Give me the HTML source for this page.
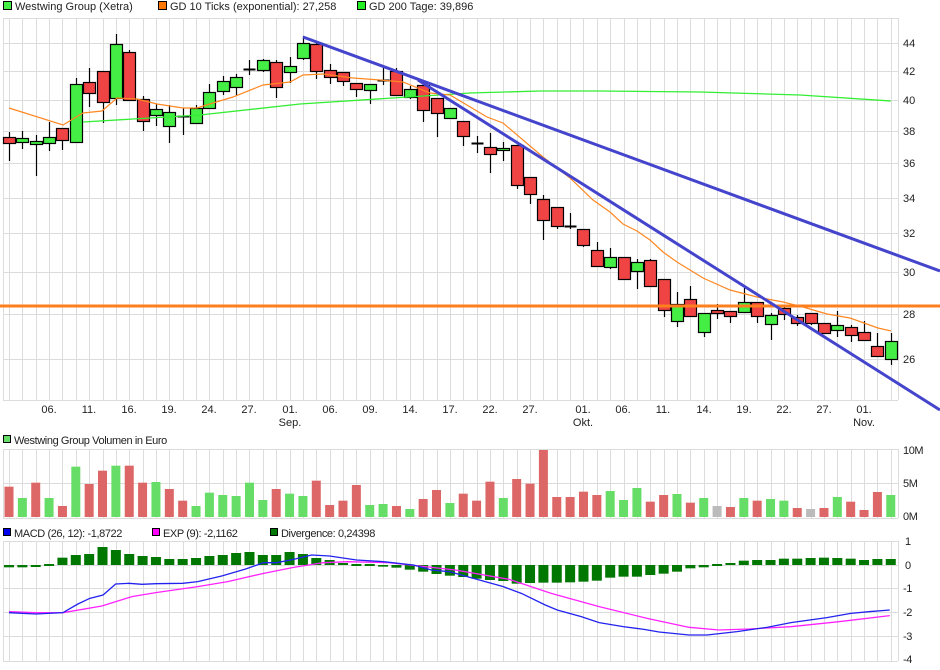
<!DOCTYPE html>
<html><head><meta charset="utf-8">
<style>
html,body{margin:0;padding:0;background:#fff;}
body{width:940px;height:670px;overflow:hidden;position:relative;font-family:"Liberation Sans",sans-serif;}
svg{position:absolute;left:0;top:0;}
text{font-family:"Liberation Sans",sans-serif;font-size:11px;fill:#222;}
.c{font-size:11px;letter-spacing:-0.4px;}
</style></head><body>
<svg id="s" width="940" height="670" viewBox="0 0 940 670">
<g id="grid"></g>
<g id="main"></g>
<rect x="3.5" y="1.5" width="8" height="8" fill="#44ee44" stroke="#000"/>
<text x="15" y="10">Westwing Group (Xetra)</text>
<rect x="158.5" y="1.5" width="8" height="8" fill="#ff7700" stroke="#000"/>
<text x="170" y="10">GD 10 Ticks (exponential): 27,258</text>
<rect x="357.5" y="1.5" width="8" height="8" fill="#22ee22" stroke="#000"/>
<text x="369" y="10">GD 200 Tage: 39,896</text>

<rect x="3.5" y="435.5" width="7" height="7" fill="#66dd66" stroke="#000"/>
<text class="c" x="14" y="444">Westwing Group Volumen in Euro</text>
<rect x="3.5" y="528.5" width="7" height="7" fill="#0000ee" stroke="#000"/>
<text class="c" x="14" y="537">MACD (26, 12): -1,8722</text>
<rect x="152.5" y="528.5" width="7" height="7" fill="#ff00ff" stroke="#000"/>
<text class="c" x="163" y="537">EXP (9): -2,1162</text>
<rect x="270.5" y="528.5" width="7" height="7" fill="#007700" stroke="#000"/>
<text class="c" x="281" y="537">Divergence: 0,24398</text>

<text x="903" y="47">44</text><text x="903" y="75">42</text><text x="903" y="104">40</text>
<text x="903" y="135">38</text><text x="903" y="167">36</text><text x="903" y="202">34</text>
<text x="903" y="237">32</text><text x="903" y="276">30</text><text x="903" y="318">28</text>
<text x="903" y="363">26</text>
<g text-anchor="middle">
<text x="49" y="413">06.</text><text x="89" y="413">11.</text><text x="129" y="413">16.</text>
<text x="169" y="413">19.</text><text x="209" y="413">24.</text><text x="249" y="413">27.</text>
<text x="290" y="413">01.</text><text x="290" y="426">Sep.</text>
<text x="330" y="413">06.</text><text x="370" y="413">09.</text><text x="410" y="413">14.</text>
<text x="450" y="413">17.</text><text x="490" y="413">22.</text><text x="530" y="413">27.</text>
<text x="583" y="413">01.</text><text x="583" y="426">Okt.</text>
<text x="623" y="413">06.</text><text x="663" y="413">11.</text><text x="704" y="413">14.</text>
<text x="744" y="413">19.</text><text x="784" y="413">22.</text><text x="824" y="413">27.</text>
<text x="864" y="413">01.</text><text x="864" y="426">Nov.</text>
</g>
<text class="c" x="903" y="454">10M</text><text class="c" x="903" y="487">5M</text><text class="c" x="903" y="520">0M</text>
<text class="c" x="905" y="545">1</text><text class="c" x="905" y="569">0</text><text class="c" x="903" y="592">-1</text>
<text class="c" x="903" y="616">-2</text><text class="c" x="903" y="640">-3</text><text class="c" x="903" y="663">-4</text>
</svg>
<script>
var NS="http://www.w3.org/2000/svg";
function el(p,t,a){var e=document.createElementNS(NS,t);for(var k in a)e.setAttribute(k,a[k]);p.appendChild(e);return e;}
var g=document.getElementById('grid'),m=document.getElementById('main');
function X(i){return 9+13.36*i;}
for(var i=0;i<67;i++){var x=Math.round(X(i))+0.5;
 el(g,'line',{x1:x,y1:18,x2:x,y2:400,stroke:'#dcdcdc'});
 el(g,'line',{x1:x,y1:449,x2:x,y2:518,stroke:'#dcdcdc'});
 el(g,'line',{x1:x,y1:541,x2:x,y2:661,stroke:'#dcdcdc'});}
[18,43,71,100,131,163,198,233,272,314,359,400].forEach(function(y){el(g,'line',{x1:3,y1:y+.5,x2:898,y2:y+.5,stroke:'#dcdcdc'});});
[449,483,518].forEach(function(y){el(g,'line',{x1:3,y1:y+.5,x2:898,y2:y+.5,stroke:'#dcdcdc'});});
[541,565,588,612,636,661].forEach(function(y){el(g,'line',{x1:3,y1:y+.5,x2:898,y2:y+.5,stroke:'#dcdcdc'});});
[[3,18,400],[898,18,400],[3,449,518],[898,449,518],[3,541,661],[898,541,661]].forEach(function(a){el(g,'line',{x1:a[0]+.5,y1:a[1],x2:a[0]+.5,y2:a[2],stroke:'#dcdcdc'});});
var C=[[137,143,132,161,'r'],[138,142,131,149,'g'],[141,144,135,176,'g'],[137,143,122,151,'g'],[128,140,128,150,'r'],
[84,142,78,142,'g'],[82,93,68,107,'r'],[71,102,71,123,'r'],[44,98,34,105,'g'],[52,100,50,100,'r'],
[99,121,96,131,'r'],[109,115,104,126,'g'],[112,126,105,143,'g'],[116,116,108,135,'d'],[108,123,105,123,'g'],
[92,108,84,108,'g'],[81,91,76,95,'g'],[77,87,74,96,'g'],[69,69,60,75,'d'],[60,70,59,72,'g'],
[62,87,60,98,'r'],[66,72,57,83,'g'],[43,58,36,60,'g'],[44,71,42,79,'r'],[70,77,64,84,'r'],
[72,81,72,86,'r'],[83,89,83,97,'r'],[84,90,84,104,'g'],[80,80,68,85,'d'],[71,95,68,95,'r'],
[89,97,86,99,'g'],[85,110,85,122,'r'],[98,113,98,137,'r'],[108,118,108,118,'g'],[121,136,121,146,'r'],
[143,143,136,153,'d'],[147,154,133,173,'r'],[148,150,142,161,'g'],[145,185,145,189,'r'],[177,194,177,204,'r'],
[199,220,195,240,'r'],[207,226,207,229,'r'],[226,226,213,229,'d'],[229,245,229,247,'r'],[250,266,242,266,'r'],
[257,267,248,269,'g'],[257,279,257,279,'r'],[262,271,259,289,'g'],[260,286,259,287,'r'],[279,310,279,317,'r'],
[304,321,292,327,'g'],[299,316,286,316,'r'],[313,332,313,337,'g'],[310,313,304,319,'r'],[311,316,311,323,'r'],
[302,312,288,312,'g'],[302,316,302,323,'r'],[315,324,313,340,'g'],[308,314,306,320,'r'],[317,323,315,326,'r'],
[313,323,313,325,'r'],[323,333,323,333,'r'],[325,330,311,337,'g'],[327,335,325,342,'r'],[332,340,321,340,'r'],
[346,356,333,356,'r'],[341,359,333,365,'g']];
C.forEach(function(c,i){var x=Math.round(X(i))+.5;
 el(m,'line',{x1:x,y1:c[2],x2:x,y2:c[3],stroke:'#000','stroke-width':1.2});
 if(c[4]=='d'){el(m,'line',{x1:x-6,y1:c[0]+.5,x2:x+6,y2:c[0]+.5,stroke:'#000','stroke-width':2});}
 else el(m,'rect',{x:x-6,y:c[0]+.5,width:12,height:Math.max(2,c[1]-c[0]),fill:c[4]=='r'?'#f04444':'#44ee44',stroke:'#000','stroke-width':1.2});
});
function pl(pts,col,w){el(m,'polyline',{points:pts.map(function(p){return p.join(',')}).join(' '),fill:'none',stroke:col,'stroke-width':w});}
pl([[83,122],[200,115],[300,104],[470,93],[540,91],[600,91],[700,92],[800,95],[891,101]],'#33ee33',1.3);
pl([[9,108],[63,125],[83,113],[102,111],[117,98],[137,99],[157,104],[183,108],[197,108],[213,103],[233,97],[263,85],[290,82],[303,75],[323,74],[353,78],[380,80],[403,82],[430,93],[450,95],[487,117],[503,123],[543,157],[570,178],[593,200],[610,212],[623,224],[637,231],[650,240],[663,252],[677,262],[703,278],[730,290],[757,297],[783,302],[803,307],[827,314],[850,318],[878,328],[891,331]],'#ff8822',1.2);
el(m,'line',{x1:0,y1:306,x2:940,y2:306,stroke:'#ff7f1e','stroke-width':3});
el(m,'line',{x1:303,y1:37,x2:940,y2:271,stroke:'#4444cc','stroke-width':3});
el(m,'line',{x1:418,y1:80,x2:940,y2:410,stroke:'#4444cc','stroke-width':3});
var V=[[170,'r'],[204,'g'],[158,'r'],[204,'g'],[228,'r'],[110,'g'],[162,'r'],[122,'r'],[107,'g'],[107,'r'],
[158,'r'],[156,'g'],[177,'r'],[212,'r'],[228,'g'],[188,'g'],[195,'g'],[198,'g'],[158,'g'],[210,'g'],
[177,'r'],[191,'g'],[198,'g'],[152,'r'],[225,'r'],[212,'r'],[165,'r'],[225,'g'],[222,'g'],[228,'r'],
[237,'g'],[207,'r'],[180,'r'],[219,'g'],[191,'r'],[212,'r'],[155,'r'],[204,'g'],[147,'r'],[161,'r'],
[60,'r'],[201,'r'],[201,'r'],[185,'r'],[195,'r'],[183,'g'],[210,'g'],[174,'g'],[215,'r'],[195,'r'],
[192,'g'],[218,'r'],[204,'g'],[228,'x'],[231,'r'],[204,'g'],[212,'r'],[207,'g'],[212,'g'],[234,'r'],
[237,'x'],[234,'r'],[201,'g'],[215,'r'],[240,'r'],[186,'r'],[195,'g']];
V.forEach(function(v,i){var x=X(i);var t=430+v[0]/3;
 el(m,'rect',{x:x-4.5,y:t,width:9,height:517-t,fill:v[1]=='r'?'#dd6666':v[1]=='g'?'#66dd66':'#bbbbbb'});});
var D=[412,412,411,408,383,375,372,351,360,372,378,381,387,387,384,378,375,369,366,375,375,366,372,384,390,399,402,402,410,413,419,425,432,437,441,446,450,453,461,459,458,458,457,455,452,443,440,440,435,431,425,415,412,402,399,392,390,390,386,386,384,383,384,386,390,387,387];
D.forEach(function(d,i){var x=X(i);var y=430+d/3;var a=Math.min(y,565),b=Math.max(y,565);if(b-a<1.5){a=564;b=566;}
 el(m,'rect',{x:x-5,y:a,width:10,height:b-a,fill:'#007700'});});
function zp(a){return a.map(function(p){return [(p[0]-15)/1.669+9,430+p[1]/3];});}
pl(zp([[15,545],[60,548],[105,548],[170,528],[220,500],[260,488],[330,470],[380,455],[440,430],[490,412],[540,398],[580,395],[650,398],[700,408],[760,420],[850,448],[920,490],[1000,530],[1080,565],[1150,592],[1200,600],[1250,597],[1320,590],[1400,575],[1485,557]]),'#ff22ff',1.3);
pl(zp([[15,548],[60,552],[105,548],[130,522],[150,505],[172,495],[193,462],[215,460],[237,463],[260,461],[305,460],[330,455],[370,438],[410,417],[440,398],[462,398],[490,388],[520,375],[550,378],[595,390],[640,395],[690,405],[720,420],[750,425],[800,450],[840,470],[870,490],[910,525],[930,540],[970,560],[1000,578],[1040,590],[1075,598],[1100,606],[1150,615],[1180,615],[1230,605],[1280,592],[1320,578],[1380,563],[1420,550],[1450,545],[1485,540]]),'#2222ee',1.3);
</script>
</body></html>
